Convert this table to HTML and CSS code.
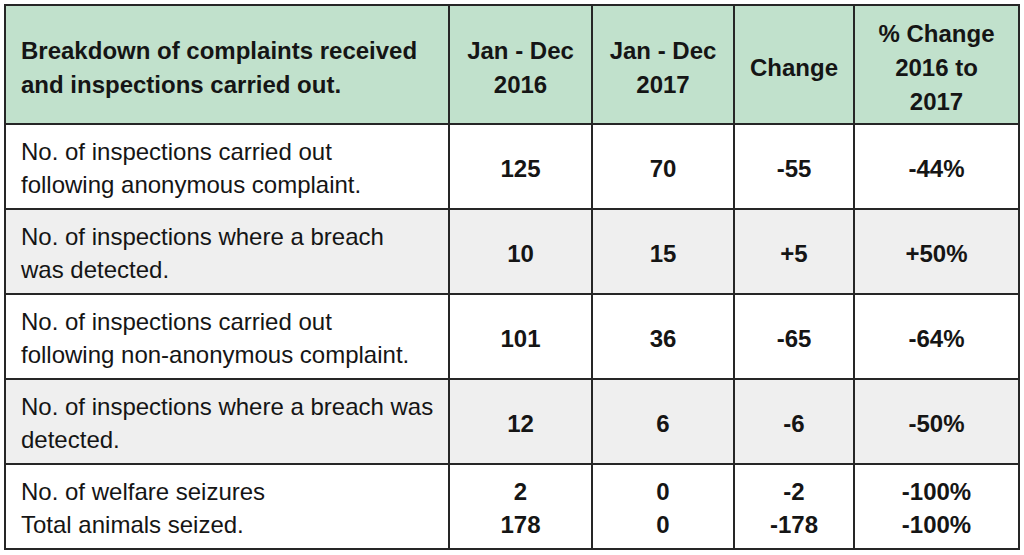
FILE: index.html
```html
<!DOCTYPE html>
<html>
<head>
<meta charset="utf-8">
<link rel="stylesheet" href="styles.css">
</head>
<body>
<table class="stats">
  <colgroup>
    <col class="c-label">
    <col class="c-2016">
    <col class="c-2017">
    <col class="c-change">
    <col class="c-pct">
  </colgroup>
  <thead>
    <tr class="head">
      <th class="label">Breakdown of complaints received<br>and inspections carried out.</th>
      <th>Jan - Dec<br>2016</th>
      <th>Jan - Dec<br>2017</th>
      <th>Change</th>
      <th>% Change<br>2016 to<br>2017</th>
    </tr>
  </thead>
  <tbody>
    <tr class="row">
      <td class="label">No. of inspections carried out<br>following anonymous complaint.</td>
      <td class="num">125</td>
      <td class="num">70</td>
      <td class="num">-55</td>
      <td class="num">-44%</td>
    </tr>
    <tr class="row alt">
      <td class="label">No. of inspections where a breach<br>was detected.</td>
      <td class="num">10</td>
      <td class="num">15</td>
      <td class="num">+5</td>
      <td class="num">+50%</td>
    </tr>
    <tr class="row">
      <td class="label">No. of inspections carried out<br>following non-anonymous complaint.</td>
      <td class="num">101</td>
      <td class="num">36</td>
      <td class="num">-65</td>
      <td class="num">-64%</td>
    </tr>
    <tr class="row alt">
      <td class="label">No. of inspections where a breach was<br>detected.</td>
      <td class="num">12</td>
      <td class="num">6</td>
      <td class="num">-6</td>
      <td class="num">-50%</td>
    </tr>
    <tr class="row last">
      <td class="label">No. of welfare seizures<br>Total animals seized.</td>
      <td class="num">2<br>178</td>
      <td class="num">0<br>0</td>
      <td class="num">-2<br>-178</td>
      <td class="num">-100%<br>-100%</td>
    </tr>
  </tbody>
</table>
</body>
</html>
```

FILE: styles.css
```css
html, body {
  margin: 0;
  padding: 0;
  background: #ffffff;
}

body {
  padding: 4px 0 0 4px;
  font-family: "Liberation Sans", Arial, sans-serif;
  color: #151515;
}

.stats {
  border-collapse: collapse;
  table-layout: fixed;
  width: 1014px;
  font-size: 24px;
  line-height: 33px;
}

.c-label { width: 444px; }
.c-2016 { width: 143px; }
.c-2017 { width: 142px; }
.c-change { width: 120px; }
.c-pct { width: 165px; }

.stats th,
.stats td {
  border: 2px solid #262626;
  padding: 0;
  vertical-align: middle;
}

.head {
  height: 119px;
  background: #c1e1cc;
}

.head th {
  font-weight: bold;
  text-align: center;
  line-height: 34px;
  padding-top: 6px;
}

.head th.label {
  text-align: left;
  padding-left: 15px;
}

.row {
  height: 85px;
  background: #ffffff;
}

.row.alt {
  background: #efefef;
}

.row td.label {
  text-align: left;
  padding-left: 15px;
  padding-top: 3px;
  font-weight: normal;
}

.row td.num {
  text-align: center;
  font-weight: bold;
  padding-top: 3px;
}
```
